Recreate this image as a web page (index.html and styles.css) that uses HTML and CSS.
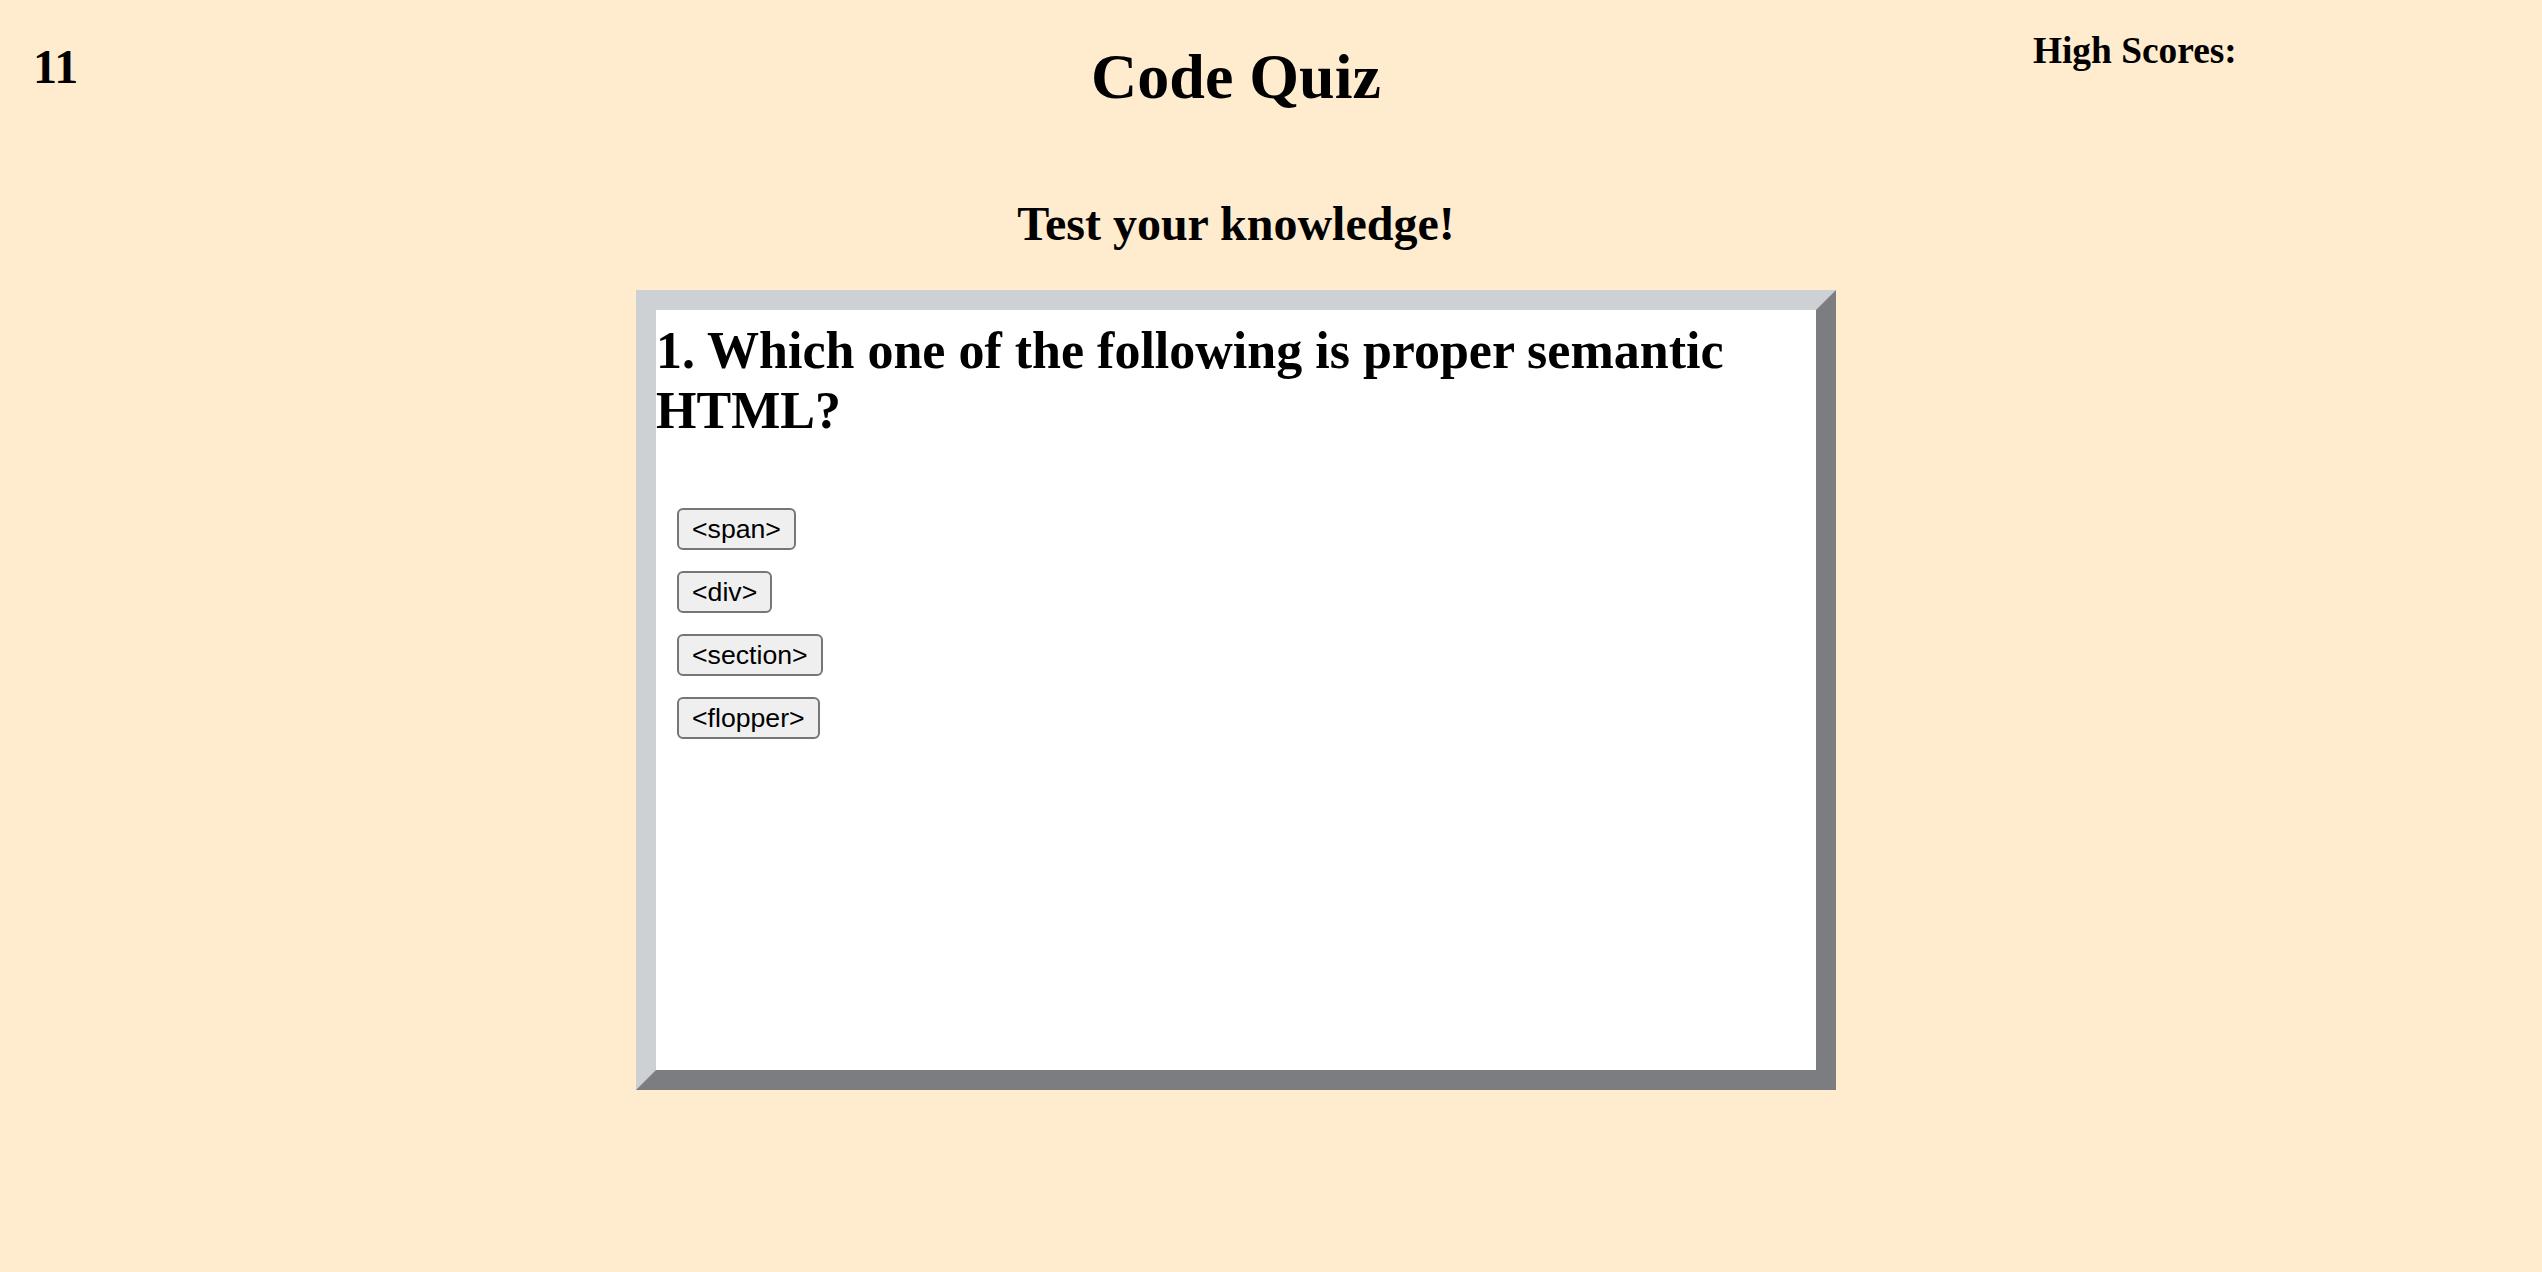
FILE: index.html
```html
<!DOCTYPE html>
<html lang="en">
<head>
<meta charset="utf-8">
<title>Code Quiz</title>
<link rel="stylesheet" href="styles.css">
</head>
<body>
<div class="page">
  <header class="top">
    <h2 class="timer">11</h2>
    <h1 class="title">Code Quiz</h1>
    <h3 class="scores">High Scores:</h3>
  </header>
  <h2 class="tagline">Test your knowledge!</h2>
  <section class="quiz">
    <h2 class="question">1. Which one of the following is proper semantic HTML?</h2>
    <ul class="answers">
      <li><button class="answer">&lt;span&gt;</button></li>
      <li><button class="answer">&lt;div&gt;</button></li>
      <li><button class="answer">&lt;section&gt;</button></li>
      <li><button class="answer">&lt;flopper&gt;</button></li>
    </ul>
  </section>
</div>
</body>
</html>
```

FILE: styles.css
```css
html, body {
  margin: 0;
  padding: 0;
}

body {
  background: #ffebcd;
  font-family: "Liberation Serif", "Times New Roman", serif;
  color: #000;
  min-height: 100vh;
}

.page {
  padding-right: 70px;
}

.top {
  display: grid;
  grid-template-columns: 1fr auto 1fr;
  align-items: start;
  height: 112px;
}

.timer {
  margin: 0;
  padding: 40px 0 0 33px;
  font-size: 48px;
  line-height: 53px;
  font-weight: bold;
}

.title {
  margin: 0;
  padding-top: 41px;
  font-size: 64px;
  line-height: 71px;
  font-weight: bold;
}

.scores {
  margin: 0;
  padding: 29px 0 0 652px;
  font-size: 37.4px;
  line-height: 43px;
  font-weight: bold;
  white-space: nowrap;
}

.tagline {
  margin: 85px 0 0;
  text-align: center;
  font-size: 48px;
  line-height: 53px;
  font-weight: bold;
}

.quiz {
  box-sizing: border-box;
  width: 1200px;
  height: 800px;
  margin: 40px auto 0;
  background: #fff;
  border-style: solid;
  border-width: 20px;
  border-color: #cdd1d3 #7c7d80 #7c7d80 #cdd1d3;
}

.question {
  margin: 11px 0 0;
  font-size: 52px;
  line-height: 60px;
  font-weight: bold;
}

.answers {
  list-style: none;
  margin: 67px 0 0;
  padding: 0 0 0 21px;
  display: flex;
  flex-direction: column;
  align-items: flex-start;
  gap: 21px;
}

.answers li {
  display: block;
}

.answer {
  display: block;
  box-sizing: border-box;
  height: 42px;
  margin: 0;
  padding: 0 13px;
  font-family: "Liberation Sans", Arial, sans-serif;
  font-size: 26.67px;
  line-height: 38px;
  color: #000;
  background: #efefef;
  border: 2px solid #767676;
  border-radius: 6px;
}
```
